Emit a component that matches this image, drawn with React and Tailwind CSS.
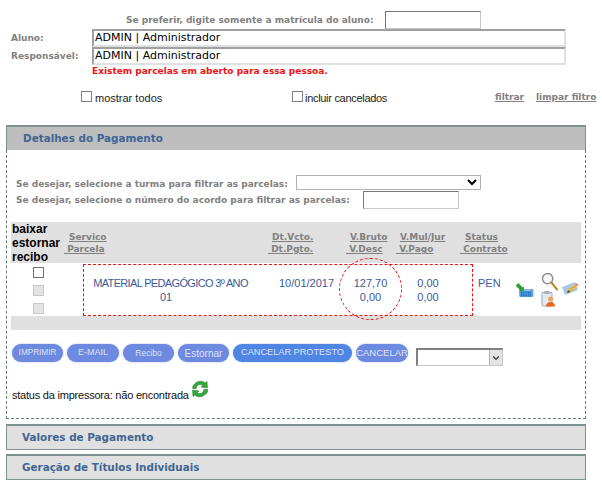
import React from 'react';
import { ChevronDown } from 'lucide-react';

const Label = ({ children, className = '' }) => (
  <span className={`font-bold text-[#808080] text-[9px] font-['DejaVu_Sans',sans-serif] whitespace-nowrap ${className}`}>{children}</span>
);

const HeaderCell = ({ top, bottom, topPad, bottomPad, className = '' }) => (
  <div className={`flex flex-col gap-[1px] pt-[2px] text-[9px] leading-[11.5px] font-bold text-[#808080] whitespace-pre font-['DejaVu_Sans',sans-serif] ${className}`}>
    <span className={`underline ${topPad}`}>{top}</span>
    <span className={`underline ${bottomPad}`}>{bottom}</span>
  </div>
);

const PillButton = ({ children, className = '' }) => (
  <button className={`h-[18px] rounded-full text-center text-[#dbe3f7] shadow-[0_0_2px_#aab8e8] font-['Liberation_Sans',sans-serif] whitespace-nowrap ${className}`}>
    {children}
  </button>
);

const Accordion = ({ title, className = '' }) => (
  <div className={`h-[26px] flex items-center pl-[15px] bg-[#e0e0e0] border border-[#7d9290] border-t-2 text-[10.4px] font-bold text-[#3f6594] font-['DejaVu_Sans',sans-serif] ${className}`}>
    {title}
  </div>
);

const CalendarIcon = () => (
  <svg width="21" height="15" viewBox="0 0 22 17" className="block">
    <rect x="5" y="7" width="16" height="9" rx="1.5" fill="#4aa3e8" />
    <rect x="5" y="7" width="16" height="2" fill="#7cc4f2" />
    <path d="M7 10.5h12M7 12.5h12M7 14.500h12" stroke="#1d4f9a" strokeWidth="1" strokeDasharray="1.200 .8" />
    <rect x="18" y="7" width="2" height="1.500" fill="#e2574c" />
    <path d="M1 3l3-3 5 5 1.500-1-.5 5-5 .5 1-1.500z" fill="#2f9e33" />
  </svg>
);

const SearchIcon = () => (
  <svg width="17" height="19" viewBox="0 0 18 20" className="block">
    <circle cx="7" cy="7" r="5.500" fill="#f4f6f8" stroke="#8c8c8c" strokeWidth="1.500" />
    <path d="M11 11l6 7.500" stroke="#b8862f" strokeWidth="2.200" strokeLinecap="round" />
  </svg>
);

const ClipboardIcon = () => (
  <svg width="15" height="16" viewBox="0 0 15 16" className="block">
    <rect x="1" y="1.500" width="10" height="13.500" rx="1" fill="#e3ebf1" stroke="#9aa8b3" />
    <rect x="3" y="0" width="6" height="3" rx="1" fill="#a8b4bd" />
    <circle cx="9.500" cy="8" r="2.500" fill="#f0a060" />
    <path d="M5 15.500c0-3 2-4.500 4.500-4.500s4.500 1.500 4.500 4.500z" fill="#e8641f" />
  </svg>
);

const PencilIcon = () => (
  <svg width="17" height="14" viewBox="0 0 17 14" className="block">
    <path d="M0 5l13-5 3 8-13 5z" fill="#a9c8e4" />
    <path d="M5 11l1-3 7-6 2.500 2-7 6z" fill="#e9b23a" />
    <path d="M5 11l1-3 2.500 2z" fill="#5b4a2c" />
    <path d="M13 2l1-1 2.500 2-1 1z" fill="#d9786a" />
  </svg>
);

const RefreshIcon = () => (
  <svg width="16" height="18" viewBox="0 0 16 18" className="block">
    <path d="M3 3.500C6 .5 11 .5 13 3l2-1.500.5 6.500-6.500-1 2-1.500c-1.500-1.500-4-1.500-5.500 0-1 1-1.200 2-1.200 3H.5C.5 6.500 1.500 5 3 3.500z" fill="#35a83a" stroke="#1f7d27" strokeWidth=".5" />
    <path d="M13 14.500c-3 3-8 3-10 .5l-2 1.500L.5 10l6.500 1-2 1.500c1.500 1.500 4 1.500 5.500 0 1-1 1.200-2 1.200-3h4.300c0 2-1 3.500-2.500 5z" fill="#35a83a" stroke="#1f7d27" strokeWidth=".5" />
  </svg>
);

export default function App() {
  return (
    <div className="relative w-[602px] h-[499px] overflow-hidden bg-white">
      {/* Filtro do aluno */}
      <div className="flex items-center h-[18px] mt-[11px] pl-[126px]">
        <Label className="mt-[1px]">Se preferir, digite somente a matrícula do aluno:</Label>
        <input className="ml-[11px] w-[96px] h-[18px] border border-[#c8c8c8] border-t-[#767676] border-l-[#767676] bg-white" />
      </div>
      <div className="flex items-center h-[18px] pl-[11px]">
        <Label className="w-[81px] mt-[2px]">Aluno:</Label>
        <div className="w-[474px] h-[18px] flex items-center pl-[1px] pt-[1px] border-2 border-[#a0a0a0] border-r-[#e0e0e0] border-b-[#e0e0e0] text-[11px] text-black font-['DejaVu_Sans',sans-serif]">ADMIN | Administrador</div>
      </div>
      <div className="flex items-center h-[18px] pl-[11px]">
        <Label className="w-[81px] mt-[2px]">Responsável:</Label>
        <div className="w-[474px] h-[18px] flex items-center pl-[1px] pt-[1px] border-2 border-[#a0a0a0] border-r-[#e0e0e0] border-b-[#e0e0e0] text-[11px] text-black font-['DejaVu_Sans',sans-serif]">ADMIN | Administrador</div>
      </div>
      <div className="h-[13px] pl-[92px] text-[9px] font-bold text-[#ee1111] font-['DejaVu_Sans',sans-serif] leading-[13px]">
        Existem parcelas em aberto para essa pessoa.
      </div>

      {/* Opções */}
      <div className="flex items-center h-[16px] mt-[12px] text-[11px] text-[#222] font-['Liberation_Sans',sans-serif]">
        <span className="ml-[81px] mb-[3px] w-[11px] h-[11px] border border-[#808080] bg-white" />
        <span className="ml-[3px] w-[197px]">mostrar todos</span>
        <span className="mb-[3px] w-[11px] h-[11px] border border-[#808080] bg-white" />
        <span className="ml-[2px] w-[190px] tracking-[-0.3px]">incluir cancelados</span>
        <Label className="underline w-[41px]">filtrar</Label>
        <Label className="underline">limpar filtro</Label>
      </div>

      {/* Detalhes */}
      <div className="ml-[6px] mt-[19px] w-[580px]">
        <div className="h-[25px] flex items-center pl-[16px] bg-[#bebebe] border border-[#7d9290] border-t-2 border-b-0 text-[10.4px] font-bold text-[#3f6594] font-['DejaVu_Sans',sans-serif]">
          Detalhes do Pagamento
        </div>
        <div className="h-[269px] border border-t-0 border-dashed border-[#5f7f7c] px-[4px]">
          <div className="pl-[5px] pt-[24px]">
            <div className="flex items-center h-[16px]">
              <Label className="w-[280px] mt-[5px]">Se desejar, selecione a turma para filtrar as parcelas:</Label>
              <select className="w-[185px] h-[15px] border border-[#b0b0b0] bg-white" />
            </div>
            <div className="flex items-center h-[18px] mt-[1px]">
              <Label className="w-[347px] mt-[2px]">Se desejar, selecione o número do acordo para filtrar as parcelas:</Label>
              <input className="w-[96px] h-[18px] border border-[#c8c8c8] border-t-[#767676] border-l-[#767676] bg-white" />
            </div>
          </div>

          {/* Tabela */}
          <div className="flex items-center h-[41px] mt-[13px] bg-[#e0e0e0]">
            <div className="w-[49px] pl-[1px] pt-[1px] text-[12px] leading-[14px] font-bold text-black font-['Liberation_Sans',sans-serif]">
              <div>baixar</div>
              <div>estornar</div>
              <div>recibo</div>
            </div>
            <HeaderCell top="Servico" bottom=" Parcela" topPad="pl-[9px]" bottomPad="pl-[4px]" className="w-[208px]" />
            <HeaderCell top="Dt.Vcto." bottom=" Dt.Pgto." topPad="pl-[4px]" className="w-[78px]" />
            <HeaderCell top="V.Bruto" bottom=" V.Desc" topPad="pl-[4px]" className="w-[50px]" />
            <HeaderCell top="V.Mul/Jur" bottom=" V.Pago" topPad="pl-[4px]" className="w-[64px]" />
            <HeaderCell top="Status" bottom=" Contrato" topPad="pl-[5px]" />
          </div>
          <div className="flex h-[53px]">
            <div className="w-[49px] flex flex-col items-center gap-[7px] pl-[5px] pt-[4px]">
              <span className="w-[11px] h-[11px] border border-[#707070] bg-white" />
              <span className="w-[11px] h-[11px] border border-[#c8c8c8] bg-[#e4e4e4]" />
              <span className="w-[11px] h-[11px] border border-[#c8c8c8] bg-[#e4e4e4]" />
            </div>
            <div className="flex w-[452px] pt-[13px] text-[11px] leading-[14px] text-[#3b5a98] font-['Liberation_Sans',sans-serif]">
              <div className="w-[219px] pl-[2px] text-center whitespace-nowrap">
                <div className="tracking-[-0.65px]">MATERIAL PEDAGÓGICO 3º ANO</div>
                <div className="pr-[9px]">01</div>
              </div>
              <div className="w-[60px]">10/01/2017</div>
              <div className="w-[63px] text-center">
                <div>127,70</div>
                <div>0,00</div>
              </div>
              <div className="w-[52px] text-center">
                <div>0,00</div>
                <div>0,00</div>
              </div>
              <div className="ml-[24px]">PEN</div>
            </div>
            <div className="flex items-start">
              <div className="ml-[2px] mt-[20px]"><CalendarIcon /></div>
              <div className="ml-[6px] mt-[9px] flex flex-col">
                <SearchIcon />
                <ClipboardIcon />
              </div>
              <div className="ml-[4px] mt-[19px]"><PencilIcon /></div>
            </div>
          </div>
          <div className="h-[14px] bg-[#e0e0e0]" />

          {/* Ações */}
          <div className="flex items-start gap-[4px] mt-[14px] h-[18px] pl-[1px]">
            <PillButton className="w-[51px] text-[8.2px] bg-[#6d8ae0]">IMPRIMIR</PillButton>
            <PillButton className="w-[52px] text-[9px] bg-[#6d8ae0]">E-MAIL</PillButton>
            <PillButton className="w-[51px] text-[8.5px] bg-[#6d8ae0]">Recibo</PillButton>
            <PillButton className="w-[51px] text-[10px] bg-[#6d8ae0]">Estornar</PillButton>
            <PillButton className="w-[119px] text-[9.2px] bg-[#4f86e4]">CANCELAR PROTESTO</PillButton>
            <PillButton className="w-[52px] text-[9.5px] bg-[#6d8ae0]">CANCELAR</PillButton>
            <div className="ml-[4px] mt-[4px] flex justify-end w-[87px] h-[18px] border border-[#c8c8c8] border-t-2 border-l-2 border-t-[#808080] border-l-[#808080] bg-white">
              <span className="flex items-center justify-center w-[13px] bg-[#e4e4e4] border-l border-[#b0b0b0]">
                <ChevronDown size={10} strokeWidth={3} className="text-[#444]" />
              </span>
            </div>
          </div>
          <div className="flex items-start gap-[3px] mt-[18px] pl-[1px] text-[11px] text-[#111] font-['Liberation_Sans',sans-serif]">
            <span className="mt-[7px] tracking-[-0.22px]">status da impressora: não encontrada</span>
            <RefreshIcon />
          </div>
        </div>
        <Accordion title="Valores de Pagamento" className="mt-[5px]" />
        <Accordion title="Geração de Títulos Individuais" className="mt-[4px]" />
      </div>

      {/* Marcação em vermelho sobre a linha */}
      <div className="absolute left-[83px] top-[264px] w-[390px] h-[52px] border border-dashed border-[#ee1111]" />
      <div className="absolute left-[339px] top-[258px] w-[63px] h-[62px] rounded-full border border-dashed border-[#ee1111]" />
    </div>
  );
}
